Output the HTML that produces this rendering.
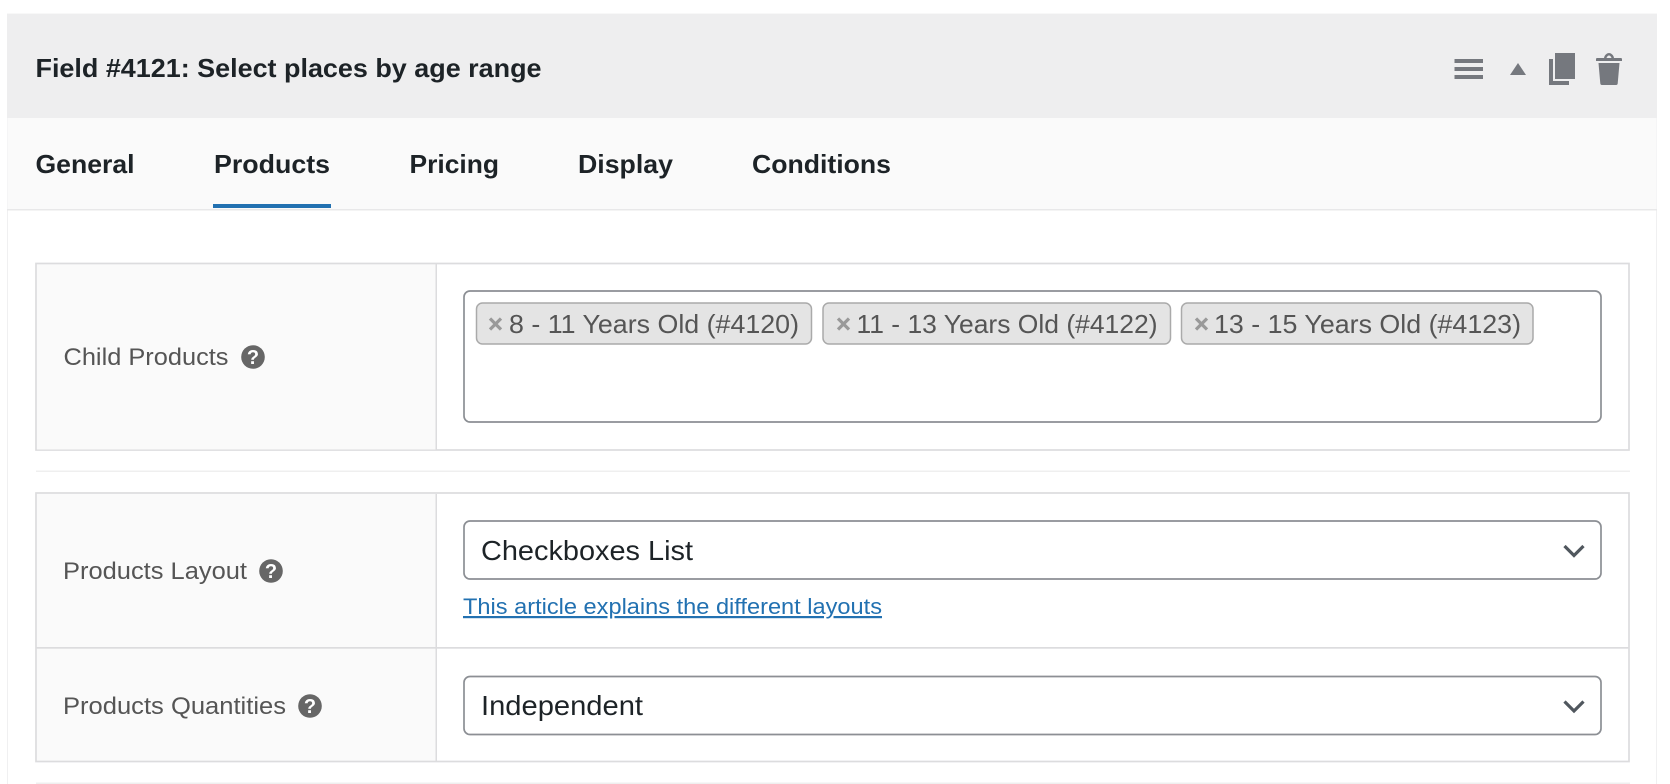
<!DOCTYPE html>
<html lang="en">
<head>
<meta charset="utf-8">
<title>Field #4121</title>
<style>
html,body{margin:0;padding:0;background:#fff;width:1670px;height:784px;overflow:hidden}
svg{display:block}
text{font-family:"Liberation Sans",sans-serif}
.b{font-weight:700;font-size:26px;fill:#1d2327}
.l{font-size:24.5px;fill:#555}
.t{font-size:26px;fill:#555}
.s{font-size:28px;fill:#1d2327}
.h{font-size:20px;font-weight:700;fill:#fff;text-anchor:middle}
.x{fill:none;stroke:#999;stroke-width:3.2}
.c{fill:none;stroke:#50575e;stroke-width:3.2}
</style>
</head>
<body>
<svg width="1670" height="784" viewBox="0 0 1670 784" xmlns="http://www.w3.org/2000/svg">
<!-- panel -->
<rect x="7.5" y="14" width="1649" height="780" fill="#fff" stroke="#f0f0f1"/>
<rect x="7" y="14" width="1650" height="104" fill="#eeeeef"/>
<rect x="7.5" y="118" width="1649" height="91" fill="#fafafa"/>
<rect x="7" y="209" width="1650" height="1.5" fill="#e8e8e9"/>
<text class="b" x="35.5" y="77" textLength="506" lengthAdjust="spacingAndGlyphs">Field #4121: Select places by age range</text>
<!-- header icons -->
<g fill="#75787e">
<rect x="1454.500" y="59" width="28.500" height="4"/>
<rect x="1454.500" y="67" width="28.500" height="4"/>
<rect x="1454.500" y="75" width="28.500" height="4"/>
<path d="M1518 63L1526 75H1510Z"/>
<path d="M1549 59h4v22h16v4h-20Z"/>
<rect x="1555" y="53" width="20" height="26"/>
<path d="M1604 58c.5-3.400 3.500-5 5-5s4.500 1.600 5 5h7c.6 0 1 .5 1 1.200V61h-26v-1.800c0-.7.4-1.200 1-1.200ZM1606.500 58h5c-.4-1.500-1.500-2.500-2.500-2.500s-2.100 1-2.500 2.500Z" fill-rule="evenodd"/>
<path d="M1598.500 63h21l-1.800 20.500c-.1.900-.7 1.500-1.600 1.500h-14.200c-.9 0-1.500-.6-1.600-1.500Z"/>
</g>
<!-- tabs -->
<text class="b" x="35.500" y="173" textLength="99" lengthAdjust="spacingAndGlyphs">General</text>
<text class="b" x="214" y="173" textLength="116" lengthAdjust="spacingAndGlyphs">Products</text>
<text class="b" x="409.500" y="173" textLength="89.500" lengthAdjust="spacingAndGlyphs">Pricing</text>
<text class="b" x="578" y="173" textLength="95" lengthAdjust="spacingAndGlyphs">Display</text>
<text class="b" x="752" y="173" textLength="139" lengthAdjust="spacingAndGlyphs">Conditions</text>
<rect x="213" y="204" width="118" height="4" fill="#2271b1"/>
<!-- table 1 -->
<rect x="36" y="263.500" width="1593" height="186.500" fill="#fff" stroke="#dcdcde" stroke-width="1.700"/>
<rect x="37" y="264.500" width="399" height="185" fill="#fafafa"/>
<rect x="435.500" y="264" width="1.500" height="186" fill="#dcdcde"/>
<text class="l" x="63.500" y="365" textLength="165" lengthAdjust="spacingAndGlyphs">Child Products</text>
<circle cx="253" cy="357" r="11.800" fill="#666"/>
<text class="h" x="253" y="364">?</text>
<rect x="464" y="291" width="1137" height="131" rx="6" fill="#fff" stroke="#8c8f94" stroke-width="1.700"/>
<!-- tags -->
<rect x="476.500" y="303" width="335" height="41" rx="6" fill="#e4e4e4" stroke="#aaa" stroke-width="1.500"/>
<path class="x" d="M490 318.500l11 11m0-11l-11 11"/>
<text class="t" x="509" y="333" textLength="290" lengthAdjust="spacingAndGlyphs">8 - 11 Years Old (#4120)</text>
<rect x="823" y="303" width="347.500" height="41" rx="6" fill="#e4e4e4" stroke="#aaa" stroke-width="1.500"/>
<path class="x" d="M838 318.500l11 11m0-11l-11 11"/>
<text class="t" x="856.500" y="333" textLength="301" lengthAdjust="spacingAndGlyphs">11 - 13 Years Old (#4122)</text>
<rect x="1181.500" y="303" width="351.500" height="41" rx="6" fill="#e4e4e4" stroke="#aaa" stroke-width="1.500"/>
<path class="x" d="M1196 318.500l11 11m0-11l-11 11"/>
<text class="t" x="1214" y="333" textLength="307" lengthAdjust="spacingAndGlyphs">13 - 15 Years Old (#4123)</text>
<!-- separator -->
<rect x="36" y="470.500" width="1594" height="1.500" fill="#efefef"/>
<!-- table 2 -->
<rect x="36" y="493" width="1593" height="268.500" fill="#fff" stroke="#dcdcde" stroke-width="1.700"/>
<rect x="37" y="494" width="399" height="266.500" fill="#fafafa"/>
<rect x="435.500" y="494" width="1.500" height="267" fill="#dcdcde"/>
<rect x="36" y="647" width="1593" height="1.700" fill="#dcdcde"/>
<text class="l" x="63" y="579" textLength="184" lengthAdjust="spacingAndGlyphs">Products Layout</text>
<circle cx="271" cy="571" r="11.800" fill="#666"/>
<text class="h" x="271" y="578">?</text>
<text class="l" x="63" y="714" textLength="223" lengthAdjust="spacingAndGlyphs">Products Quantities</text>
<circle cx="310" cy="706" r="11.800" fill="#666"/>
<text class="h" x="310" y="713">?</text>
<!-- select 1 -->
<rect x="464" y="521" width="1137" height="58" rx="6" fill="#fff" stroke="#8c8f94" stroke-width="1.700"/>
<text class="s" x="481" y="560" textLength="212" lengthAdjust="spacingAndGlyphs">Checkboxes List</text>
<path class="c" d="M1564.500 546l9.500 9.500 9.500-9.500"/>
<text x="463" y="614" font-size="22" fill="#2271b1" text-decoration="underline" textLength="419" lengthAdjust="spacingAndGlyphs">This article explains the different layouts</text>
<!-- select 2 -->
<rect x="464" y="676.500" width="1137" height="58" rx="6" fill="#fff" stroke="#8c8f94" stroke-width="1.700"/>
<text class="s" x="481" y="715" textLength="162" lengthAdjust="spacingAndGlyphs">Independent</text>
<path class="c" d="M1564.500 701.500l9.500 9.500 9.500-9.500"/>
<!-- bottom separator -->
<rect x="36" y="782.500" width="1594" height="1.500" fill="#efefef"/>
</svg>
</body>
</html>
